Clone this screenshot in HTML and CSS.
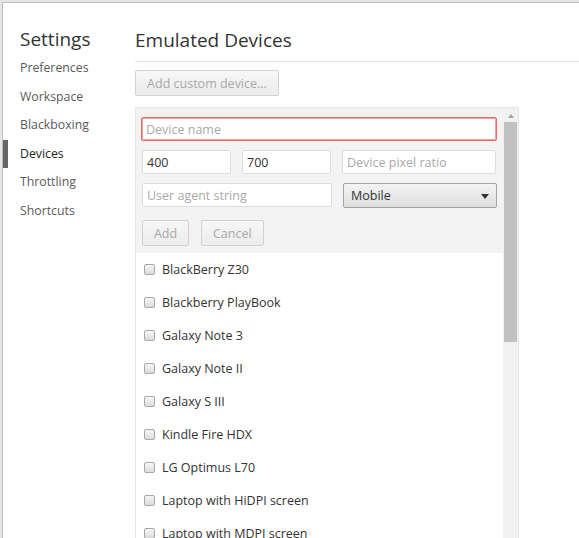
FILE: index.html
```html
<!DOCTYPE html>
<html lang="en">
<head>
  <meta charset="UTF-8" />
  <title>Settings</title>
  <link rel="stylesheet" href="styles.css">
</head>
<body>

<div class="dialog">
  <div class="sidebar">
    <h1>Settings</h1>
    <a class="tab">Preferences</a>
    <a class="tab">Workspace</a>
    <a class="tab">Blackboxing</a>
    <a class="tab selected">Devices</a>
    <a class="tab">Throttling</a>
    <a class="tab">Shortcuts</a>
  </div>

  <div class="main">
    <h2>Emulated Devices</h2>
    <button class="btn wide" disabled>Add custom device...</button>

    <div class="list">
      <div class="list-body">
        <div class="editor">
          <div class="row">
            <input class="field full invalid" placeholder="Device name">
          </div>
          <div class="row">
            <input class="field small" value="400">
            <input class="field small" value="700">
            <input class="field large" placeholder="Device pixel ratio">
          </div>
          <div class="row">
            <input class="field medium" placeholder="User agent string">
            <div class="select">Mobile <span class="arrow"></span></div>
          </div>
          <div class="row buttons">
            <button class="btn" disabled>Add</button>
            <button class="btn" disabled>Cancel</button>
          </div>
        </div>

        <label class="item"><span class="check"></span>BlackBerry Z30</label>
        <label class="item"><span class="check"></span>Blackberry PlayBook</label>
        <label class="item"><span class="check"></span>Galaxy Note 3</label>
        <label class="item"><span class="check"></span>Galaxy Note II</label>
        <label class="item"><span class="check"></span>Galaxy S III</label>
        <label class="item"><span class="check"></span>Kindle Fire HDX</label>
        <label class="item"><span class="check"></span>LG Optimus L70</label>
        <label class="item"><span class="check"></span>Laptop with HiDPI screen</label>
        <label class="item"><span class="check"></span>Laptop with MDPI screen</label>
      </div>
      <div class="scrollbar">
        <div class="up"></div>
        <div class="thumb"></div>
      </div>
    </div>
  </div>
</div>

</body>
</html>
```

FILE: styles.css
```css
body { margin: 0; background: #e6e6e6; font-family: "Open Sans", "Noto Sans", sans-serif; color: #333; overflow: hidden; }
.dialog {
  margin: 2px 0 0 2px; height: 536px; background: white;
  border-left: 1px solid #bdbdbd; border-top: 1px solid #bdbdbd;
  display: flex;
}
.sidebar { width: 132px; flex: none; padding-top: 22px; }
.sidebar h1 { font-size: 19px; font-weight: normal; margin: 0 0 1px 17px; line-height: 28px; color: #333; }
.tab {
  display: block; height: 28.6px; line-height: 28px; font-size: 12.3px; color: #5a5a5a;
  border-left: 5px solid transparent; padding-left: 12px;
}
.tab.selected { border-left-color: #666; color: #222; }

.main { flex: 1; }
.main h2 {
  font-size: 19px; font-weight: normal; color: #333; margin: 0;
  padding: 23px 0 7px; line-height: 28px; border-bottom: 1px solid #e4e4e4;
}
.btn {
  font-family: inherit; font-size: 12.5px; color: #a8a8a8; height: 26px;
  padding: 0 11px; border: 1px solid #d2d2d2; border-radius: 2px;
  background: linear-gradient(#f7f7f7, #ececec);
}
.btn.wide { margin-top: 8px; width: 144px; padding: 0; }

.list {
  margin-top: 11px; width: 382px; height: 440px; border: 1px solid #e6e6e6;
  display: flex; overflow: hidden;
}
.list-body { flex: 1; }
.editor { background: #f3f3f3; padding: 9px 5px 7px 5px; }
.row { display: flex; gap: 11px; margin-bottom: 9px; }
.row.buttons { margin: 12px 0 0 1px; gap: 12px; }
.row.buttons .btn:first-child { width: 47px; padding: 0; }
.field {
  font-family: inherit; font-size: 12.5px; color: #333; height: 24px; box-sizing: border-box;
  border: 1px solid #dcdcdc; border-radius: 2px; padding: 0 4px; background: white;
}
.field::placeholder { color: #a9a9a9; }
.field.full { width: 356px; }
.field.invalid { border: 1px solid #e86868; box-shadow: 0 0 0 1px #f0a0a0 inset; }
.row .field.small { width: 89px; margin-left: 1px; }
.row .field.small + .field.small { margin-left: 0; }
.field.large { width: 154px; }
.field.medium { width: 190px; margin-left: 1px; }
.select {
  width: 154px; height: 25px; box-sizing: border-box; font-size: 12.5px; color: #333;
  border: 1px solid #a5a5a5; border-radius: 2px; padding: 0 7px; line-height: 23px;
  background: linear-gradient(#f4f4f4, #dedede); position: relative;
}
.arrow {
  position: absolute; right: 7px; top: 10px; width: 0; height: 0;
  border-left: 4px solid transparent; border-right: 4px solid transparent; border-top: 5px solid #333;
}

.item { display: flex; align-items: center; height: 33px; font-size: 12.5px; color: #333; padding-left: 8px; }
.check {
  width: 9px; height: 9px; border: 1px solid #a8a8a8; border-radius: 2px; margin-right: 7px;
  background: linear-gradient(#f6f6f6, #dcdcdc);
}

.scrollbar { width: 15px; flex: none; background: #f1f1f1; }
.up {
  width: 0; height: 0; margin: 6px auto 4px; border-left: 3px solid transparent;
  border-right: 3px solid transparent; border-bottom: 4px solid #a3a3a3;
}
.thumb { margin: 0 1px; height: 220px; background: #c1c1c1; }
```
